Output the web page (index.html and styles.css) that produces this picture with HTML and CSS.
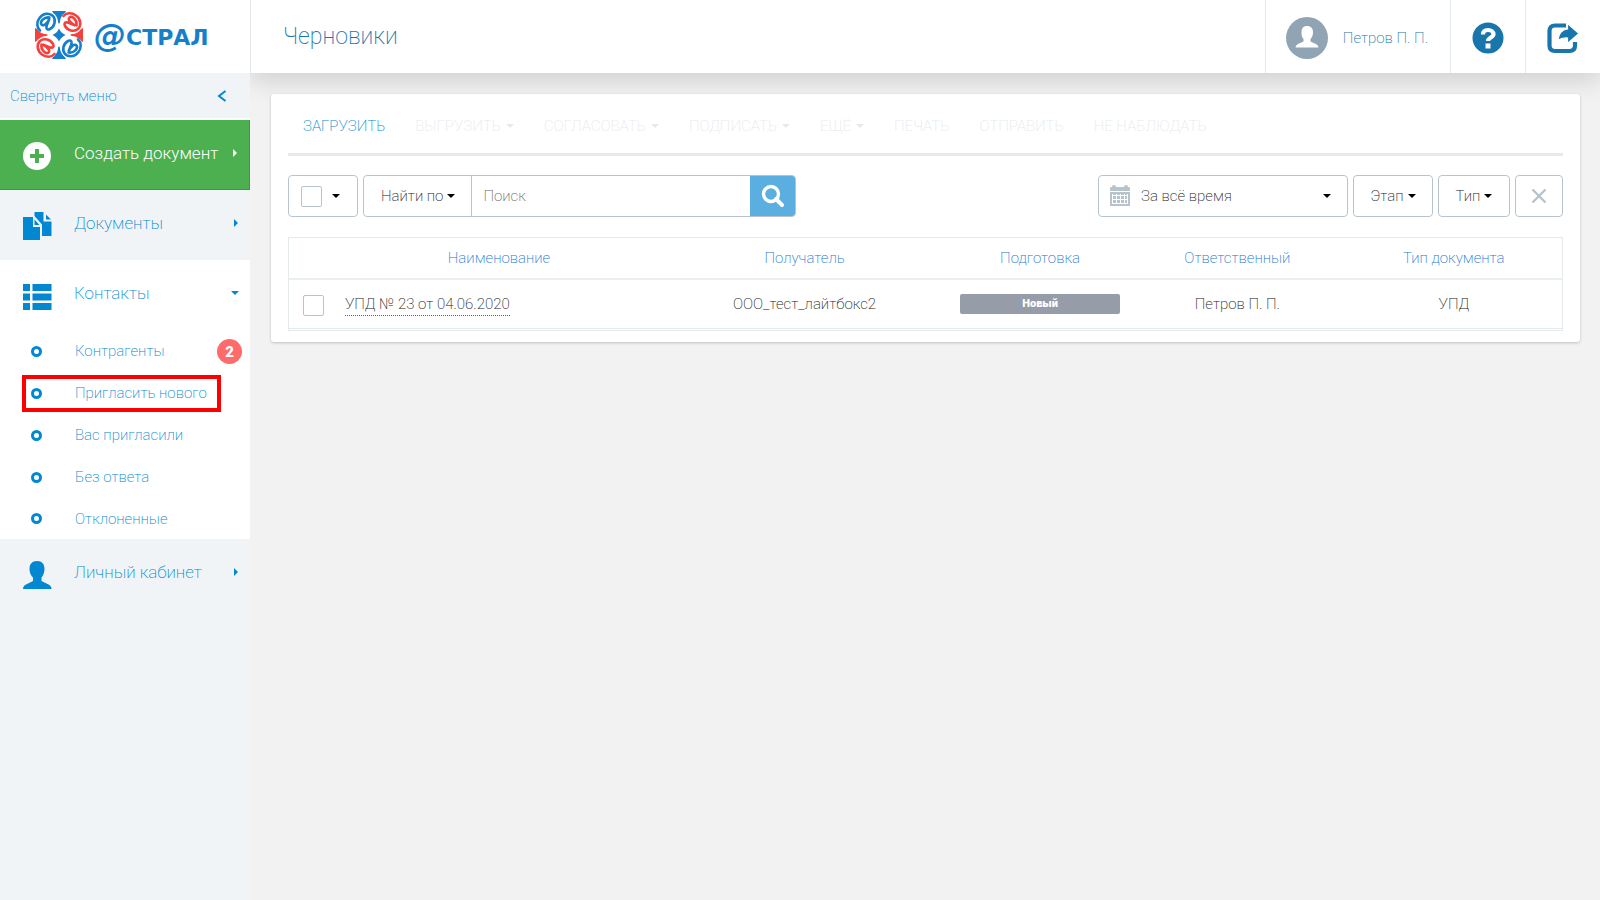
FILE: index.html
```html
<!DOCTYPE html>
<html lang="ru">
<head>
<meta charset="utf-8">
<title>Черновики</title>
<link rel="stylesheet" href="styles.css">
</head>
<body>
<div class="app">
  <aside class="sidebar">
    <a class="logo" href="#" aria-label="Астрал">
      <svg class="logo-mark" viewBox="0 0 50 50" aria-hidden="true">
        <path fill="#167fc9" d="M18 1h14L25 14z M18 49h14L25 36z"/>
        <path fill="#f5403d" d="M1 18v14l13-7z M49 18v14L36 25z"/>
        <path fill="#167fc9" d="M25 18.500q2 4.500 6.500 6.500-4.500 2-6.500 6.500-2-4.500-6.500-6.500 4.500-2 6.500-6.500z"/>
        <g fill="#fff"><circle cx="12.500" cy="12.500" r="11.500"/><circle cx="37.500" cy="12.500" r="11.500"/><circle cx="12.500" cy="37.500" r="11.500"/><circle cx="37.500" cy="37.500" r="11.500"/></g>
        <g fill="none" stroke-linecap="round" stroke-width="2.600">
          <g stroke="#167fc9">
            <path d="M6 20.500C2.500 17.500 2.500 12 5.500 8C9 3 15.500 2.500 19 6C22.500 10 20.500 16.500 16 19C14 20 12 19.500 12.500 17"/>
            <path d="M15.500 7.500C10 6.500 5.500 12 7.500 14.500C9.500 17 14 12.500 15.500 8.500L12.500 16"/>
          </g>
          <g stroke="#f5403d" transform="rotate(90 25 25)">
            <path d="M6 20.500C2.500 17.500 2.500 12 5.500 8C9 3 15.500 2.500 19 6C22.500 10 20.500 16.500 16 19C14 20 12 19.500 12.500 17"/>
            <path d="M15.500 7.500C10 6.500 5.500 12 7.500 14.500C9.500 17 14 12.500 15.500 8.500L12.500 16"/>
          </g>
          <g stroke="#167fc9" transform="rotate(180 25 25)">
            <path d="M6 20.500C2.500 17.500 2.500 12 5.500 8C9 3 15.500 2.500 19 6C22.500 10 20.500 16.500 16 19C14 20 12 19.500 12.500 17"/>
            <path d="M15.500 7.500C10 6.500 5.500 12 7.500 14.500C9.500 17 14 12.500 15.500 8.500L12.500 16"/>
          </g>
          <g stroke="#f5403d" transform="rotate(270 25 25)">
            <path d="M6 20.500C2.500 17.500 2.500 12 5.500 8C9 3 15.500 2.500 19 6C22.500 10 20.500 16.500 16 19C14 20 12 19.500 12.500 17"/>
            <path d="M15.500 7.500C10 6.500 5.500 12 7.500 14.500C9.500 17 14 12.500 15.500 8.500L12.500 16"/>
          </g>
        </g>
      </svg>
      <span class="logo-text"><span class="logo-at">@</span><span>СТРАЛ</span></span>
    </a>
    <button class="collapse" type="button">
      <span>Свернуть меню</span>
      <svg width="10" height="12" viewBox="0 0 10 12" aria-hidden="true"><path d="M8.500 1L2 6l6.500 5" fill="none" stroke="currentColor" stroke-width="2"/></svg>
    </button>
    <nav>
      <a class="item create" href="#">
        <svg class="item-icon" viewBox="0 0 30 30" aria-hidden="true"><circle cx="15" cy="15" r="14" fill="#fff"/><path d="M13 8h4v5h5v4h-5v5h-4v-5H8v-4h5z" fill="#4caf50"/></svg>
        <span class="item-label">Создать документ</span><i class="arrow"></i>
      </a>
      <a class="item" href="#">
        <svg class="item-icon" viewBox="0 0 30 30" aria-hidden="true"><path fill="currentColor" d="M1 6h10v10h7v13H1z M12.500 6.500v-5.500h9v9.500h8V25h-9.500V14z M24 3.500l5 5h-5z M12.500 8.500l5 5.500h-5z"/><path d="M11.800 5.500l7.700 8.500" stroke="#f0f4f7" stroke-width="1.500"/></svg>
        <span class="item-label">Документы</span><i class="arrow"></i>
      </a>
      <div class="group">
        <a class="item" href="#">
          <svg class="item-icon" viewBox="0 0 30 30" aria-hidden="true"><path fill="currentColor" d="M1 3h7v7H1z M10.500 3h19v7h-19z M1 12.500h7v7H1z M10.500 12.500h19v7h-19z M1 22h7v7H1z M10.500 22h19v7h-19z"/></svg>
          <span class="item-label">Контакты</span><i class="caret"></i>
        </a>
        <ul class="sub">
          <li><a href="#"><i class="dot"></i>Контрагенты<span class="count">2</span></a></li>
          <li class="marked"><a href="#"><i class="dot"></i>Пригласить нового</a></li>
          <li><a href="#"><i class="dot"></i>Вас пригласили</a></li>
          <li><a href="#"><i class="dot"></i>Без ответа</a></li>
          <li><a href="#"><i class="dot"></i>Отклоненные</a></li>
        </ul>
      </div>
      <a class="item" href="#">
        <svg class="item-icon" viewBox="0 0 30 30" aria-hidden="true"><path fill="currentColor" d="M15 1c5 0 7.500 3 7.500 8 0 4-1.500 6.500-3 8.500v3.500l7 3.500q3 1.500 3 4.500H1q0-3 3-4.500l7-3.500v-3.500C9 15.500 7.500 13 7.500 9c0-5 2.500-8 7.500-8z"/></svg>
        <span class="item-label">Личный кабинет</span><i class="arrow"></i>
      </a>
    </nav>
  </aside>
  <div class="page">
    <header class="topbar">
      <h1>Черновики</h1>
      <a class="user" href="#">
        <svg width="42" height="42" viewBox="0 0 42 42" aria-hidden="true"><circle cx="21" cy="21" r="21" fill="#90a4b4"/><path fill="#fff" d="M21 9c4 0 6 2.500 6 6.500 0 3-1 5-2.500 6.500v2.500l5.500 2.500q2.500 1 2.500 3.500h-23q0-2.500 2.500-3.500l5.500-2.500V22C16 20.500 15.500 18.500 15.500 15.500 15.500 11.500 17 9 21 9z"/></svg>
        <span>Петров П. П.</span>
      </a>
      <a class="top-icon" href="#" aria-label="Справка">
        <svg width="32" height="32" viewBox="0 0 32 32" aria-hidden="true"><circle cx="16" cy="16" r="15.500" fill="#1976ac"/><path d="M11 12.500C11 9 13 8 16 8s5.500 1.500 5.500 4.300C21.500 15.500 16 15.500 16 19" fill="none" stroke="#fff" stroke-width="4.200"/><path d="M13.500 21.500h5v5h-5z" fill="#fff"/></svg>
      </a>
      <a class="top-icon" href="#" aria-label="Выход">
        <svg width="32" height="32" viewBox="0 0 32 32" aria-hidden="true"><path d="M19 3.500H8Q2.500 3.500 2.500 9v14.500Q2.500 29 8 29h14.500q5.500 0 5.500-5.500V20" fill="none" stroke="#1976ac" stroke-width="4.200"/><path d="M20.500 1.500l11.500 10-11.500 10v-5.500q-6-.5-9.500 2.500 1-10.500 9.500-11.500z" fill="#1976ac" stroke="#fff" stroke-width="1.200"/></svg>
      </a>
    </header>
    <main class="card">
      <div class="actions">
        <button type="button" class="on">ЗАГРУЗИТЬ</button>
        <button type="button" disabled>ВЫГРУЗИТЬ<i class="caret"></i></button>
        <button type="button" disabled>СОГЛАСОВАТЬ<i class="caret"></i></button>
        <button type="button" disabled>ПОДПИСАТЬ<i class="caret"></i></button>
        <button type="button" disabled>ЕЩЁ<i class="caret"></i></button>
        <button type="button" disabled>ПЕЧАТЬ</button>
        <button type="button" disabled>ОТПРАВИТЬ</button>
        <button type="button" disabled>НЕ НАБЛЮДАТЬ</button>
      </div>
      <div class="filters">
        <div class="box pick"><input type="checkbox" aria-label="Выбрать все"><button type="button" class="pick-more" aria-label="Варианты выбора"><i class="caret"></i></button></div>
        <form class="search">
          <button type="button" class="search-by">Найти по<i class="caret"></i></button>
          <input type="text" placeholder="Поиск" aria-label="Поиск">
          <button type="submit" class="search-go" aria-label="Найти"><svg width="24" height="24" viewBox="0 0 24 24" aria-hidden="true"><circle cx="10" cy="10" r="7.500" fill="none" stroke="#fff" stroke-width="3.400"/><path d="M15 15l6 6" stroke="#fff" stroke-width="4" stroke-linecap="round"/></svg></button>
        </form>
        <label class="box period">
          <svg width="20" height="22" viewBox="0 0 20 22" aria-hidden="true"><path fill="#b7c4cc" d="M0 6V3q0-1 1-1h1q0-2 2-2t2 2h8q0-2 2-2t2 2h1q1 0 1 1v3z M0 7h20v14H0z"/><path stroke="#fff" d="M2 10.500h16M2 14.500h16M2 18.500h16M2.500 9v10M6.500 9v10M10.500 9v10M14.500 9v10M17.500 9v10" fill="none"/></svg>
          <select aria-label="Период"><option>За всё время</option></select>
          <i class="caret"></i>
        </label>
        <button type="button" class="box stage">Этап<i class="caret"></i></button>
        <button type="button" class="box kind">Тип<i class="caret"></i></button>
        <button type="button" class="box reset" aria-label="Сбросить"><svg width="16" height="16" viewBox="0 0 16 16" aria-hidden="true"><path d="M1.500 1.500l13 13M14.500 1.500l-13 13" stroke="#b7c4cc" stroke-width="2.400"/></svg></button>
      </div>
      <table>
        <colgroup><col class="c-check"><col class="c-name"><col class="c-to"><col class="c-state"><col class="c-owner"><col class="c-type"></colgroup>
        <thead><tr><th></th><th>Наименование</th><th>Получатель</th><th>Подготовка</th><th>Ответственный</th><th>Тип документа</th></tr></thead>
        <tbody><tr>
          <td><input type="checkbox" aria-label="Выбрать УПД № 23"></td>
          <td class="name"><a href="#">УПД № 23 от 04.06.2020</a></td>
          <td>ООО_тест_лайтбокс2</td>
          <td><span class="state">Новый</span></td>
          <td>Петров П. П.</td>
          <td>УПД</td>
        </tr></tbody>
      </table>
    </main>
  </div>
</div>
</body>
</html>
```

FILE: styles.css
```css
* { box-sizing: border-box; }

body {
  margin: 0;
  background: #f2f2f2;
  color: #222;
  font: 200 15px/20px Roboto, sans-serif;
}

a { color: inherit; text-decoration: none; }

button, input, select {
  margin: 0;
  padding: 0;
  border: 0;
  background: none;
  color: inherit;
  font: inherit;
}

.app {
  display: grid;
  grid-template-columns: 250px 1fr;
  min-height: 100vh;
}

.caret {
  border: 4px solid transparent;
  border-top-color: currentColor;
  border-bottom: 0;
}

.arrow {
  border: 4px solid transparent;
  border-left-color: currentColor;
  border-right: 0;
}

/* Sidebar */

.sidebar {
  position: relative;
  z-index: 1;
  background: #f0f4f7;
  color: #0288d1;
}

.logo {
  display: flex;
  align-items: center;
  gap: 10px;
  height: 73px;
  padding: 0 0 4px 34px;
  background: #fff;
  color: #167fc9;
}

.logo-mark { width: 50px; height: 50px; }

.logo-text {
  display: flex;
  align-items: center;
  padding-top: 6px;
  font: 700 22px/32px "DejaVu Sans", sans-serif;
}

.logo-at { padding-bottom: 6px; font-size: 32px; font-style: italic; }

.collapse {
  display: flex;
  align-items: center;
  justify-content: space-between;
  width: 100%;
  height: 47px;
  padding: 0 23px 0 10px;
  border-bottom: 2px solid #fff;
}

.item {
  display: flex;
  align-items: center;
  height: 70px;
  padding: 0 12px 4px 22px;
  font-size: 17px;
}

.item .caret { margin-right: -1px; }
.item-icon { width: 30px; height: 30px; margin: 6px 22px 0 0; }
.item-label { flex: 1; }

.create {
  border: solid #2f9e35;
  border-width: 0 1px 1px 0;
  background: #4caf50;
  color: #fff;
  font-weight: 300;
}

.group { background: #fff; }

.sub { margin: 0; padding: 0; list-style: none; }
.sub li { position: relative; height: 42px; }
.sub li:last-child { height: 41px; }

.sub a {
  display: flex;
  align-items: center;
  height: 100%;
  padding: 0 8px 0 31px;
}

.dot {
  width: 11px;
  height: 11px;
  margin-right: 33px;
  border: 3px solid #0288d1;
  border-radius: 50%;
}

.count {
  width: 25px;
  height: 25px;
  margin-left: auto;
  border-radius: 50%;
  background: #ff6b6b;
  color: #fff;
  font-weight: 900;
  line-height: 26px;
  text-align: center;
}

.marked::after {
  content: "";
  position: absolute;
  inset: 3px 29px 2px 22px;
  border: 4px solid #f00;
  pointer-events: none;
}

/* Top bar */

.page { min-width: 0; }

.topbar {
  display: flex;
  align-items: stretch;
  height: 73px;
  border-left: 1px solid #e4e7ea;
  background: #fff;
  box-shadow: 0 8px 24px rgba(0, 0, 0, 0.14);
  color: #1976ac;
}

.topbar h1 {
  flex: 1;
  margin: 0;
  padding: 1px 0 0 32px;
  font-size: 23px;
  font-weight: inherit;
  line-height: 72px;
}

.user, .top-icon {
  display: flex;
  align-items: center;
  justify-content: center;
  border-left: 1px solid #e1e8ee;
}

.user { gap: 15px; padding: 2px 22px 0 20px; }
.top-icon { width: 75px; padding-top: 2px; }

/* Card */

.card {
  position: relative;
  margin: 21px 20px 0 21px;
  padding: 0 17px 11px;
  border-radius: 3px;
  background: #fff;
  box-shadow: 0 1px 3px rgba(0, 0, 0, 0.2);
}

.actions {
  display: flex;
  gap: 30px;
  height: 62px;
  padding: 5px 0 0 15px;
  border-bottom: 3px solid #e4eaee;
}

.actions button { display: flex; align-items: center; color: #e6eaee; }
.actions .on { color: #0288d1; }
.actions .caret { margin-left: 5px; }

.filters {
  display: flex;
  gap: 5px;
  margin: 19px 0 20px;
}

.box, .search {
  display: flex;
  align-items: center;
  justify-content: center;
  height: 42px;
  border: 1px solid #b7c4cc;
  border-radius: 4px;
}

.filters .caret { margin-left: 4px; border-top-color: #000; }

input[type="checkbox"] {
  display: block;
  width: 21px;
  height: 21px;
  border: 1px solid #b7c4cc;
  border-radius: 2px;
  appearance: none;
}

.pick { width: 70px; gap: 6px; padding-right: 6px; }
.pick-more { display: flex; }

.search { flex: 0 1 433px; margin-right: auto; overflow: hidden; }

.search-by {
  display: flex;
  align-items: center;
  align-self: stretch;
  padding: 0 16px 0 17px;
  border-right: 1px solid #b7c4cc;
  white-space: nowrap;
}

.search input { flex: 1; min-width: 0; padding-left: 11px; }
.search input::placeholder { color: #666; opacity: 1; }

.search-go {
  display: grid;
  place-items: center;
  align-self: stretch;
  width: 45px;
  background: #5aafe0;
}

.period { width: 250px; padding: 0 16px 0 11px; }
.period select { flex: 1; margin-left: 11px; appearance: none; }
.stage { width: 80px; }
.kind { width: 72px; }
.reset { width: 48px; }

/* Documents */

table {
  width: 100%;
  border: 1px solid #e4eaec;
  border-bottom: 3px double #e4eaec;
  border-spacing: 0;
  table-layout: fixed;
}

.c-check { width: 4%; }
.c-name { width: 25%; }
.c-to { width: 23%; }
.c-state { width: 14%; }
.c-owner { width: 17%; }
.c-type { width: 17%; }

th, td { padding: 0; text-align: center; }

th {
  height: 42px;
  border-bottom: 2px solid #eceff0;
  color: #1976d2;
  font-weight: inherit;
}

td { height: 48px; }
td input[type="checkbox"] { margin: 2px 0 0 14px; }

.name { padding-left: 5px; text-align: left; }
.name a { border-bottom: 1px dotted #1976ac; padding-bottom: 2px; }

.state {
  display: block;
  margin: 0 9px;
  border-radius: 2px;
  background: #979da8;
  color: #fff;
  font-size: 11px;
  font-weight: 900;
}
```
